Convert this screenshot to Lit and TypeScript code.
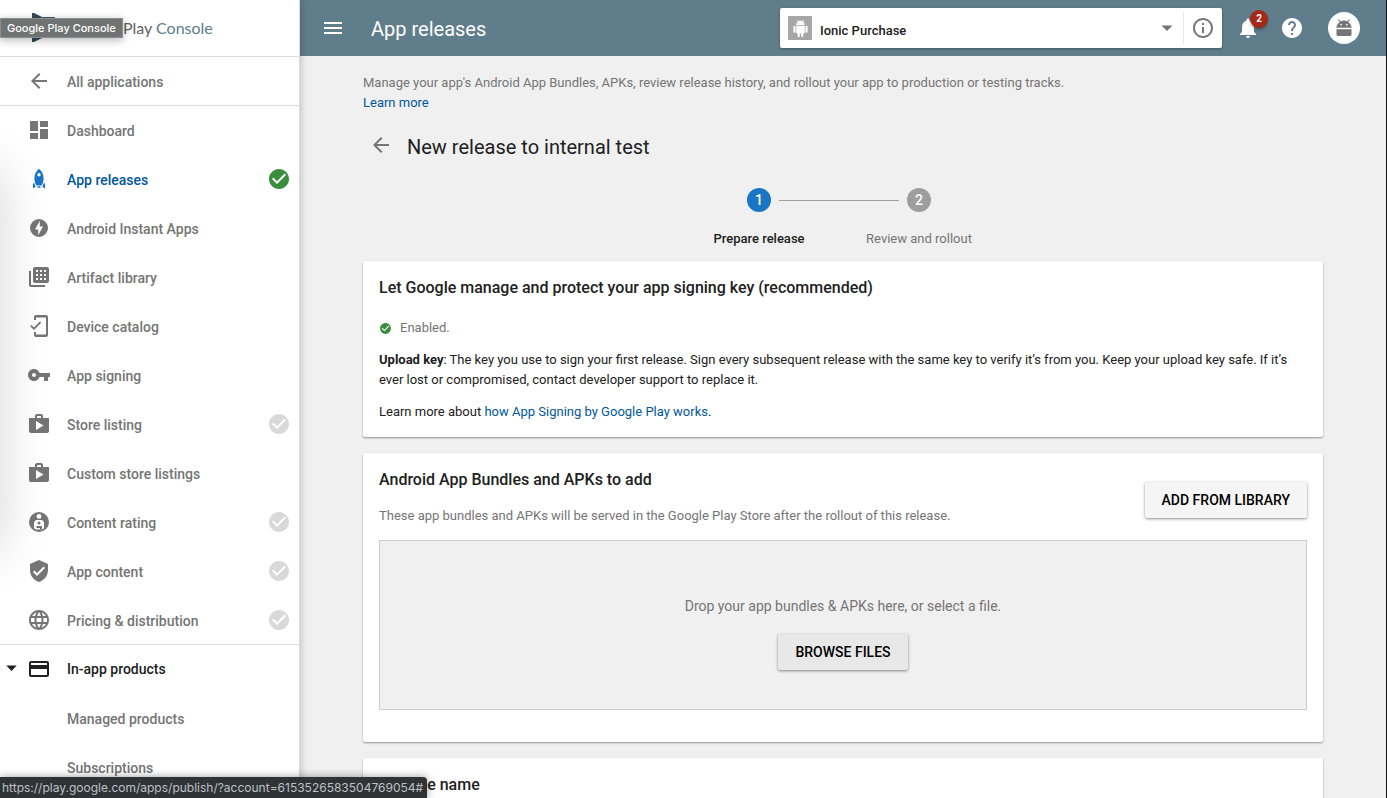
import { LitElement, html, css, svg, nothing } from "lit";
import { customElement } from "lit/decorators.js";

const icons: Record<string, unknown> = {
  back: svg`<path d="M20 11H7.83l5.59-5.59L12 4l-8 8 8 8 1.41-1.41L7.83 13H20v-2z"/>`,
  menu: svg`<path d="M3 18h18v-2H3v2zm0-5h18v-2H3v2zm0-7v2h18V6H3z"/>`,
  dashboard: svg`<path d="M3 13h8V3H3v10zm0 8h8v-6H3v6zm10 0h8V11h-8v10zm0-18v6h8V3h-8z"/>`,
  rocket: svg`<path fill-rule="evenodd" d="M12 1.800C9 4.200 7.400 7.600 7.400 11.400c0 2.600.8 4.900 2 7.100h5.200c1.200-2.200 2-4.500 2-7.100C16.600 7.600 15 4.200 12 1.800zm0 4.200a1.700 1.700 0 1 1 0 3.400A1.700 1.700 0 0 1 12 6z"/><path d="M7 15.500l-1 1.800V21.500l2.600-1.800zM17 15.500l1 1.800v4.200l-2.600-1.800zM10.600 19.200h2.800v1.600h-2.800z"/>`,
  instant: svg`<path fill-rule="evenodd" d="M12 3a9 9 0 1 0 0 18 9 9 0 0 0 0-18zm-.8 16.200v-5.700H8l4.800-8.700v5.700H16l-4.800 8.700z"/>`,
  artifact: svg`<path fill-rule="evenodd" d="M2 6h2v14h14v2H4c-1.100 0-2-.9-2-2zM8 2h12c1.100 0 2 .9 2 2v12c0 1.100-.9 2-2 2H8c-1.100 0-2-.9-2-2V4c0-1.100.9-2 2-2zm1 3v2h2V5zm4 0v2h2V5zm4 0v2h2V5zM9 9v2h2V9zm4 0v2h2V9zm4 0v2h2V9zM9 13v2h2v-2zm4 0v2h2v-2zm4 0v2h2v-2z"/>`,
  device: svg`<path d="M19 1H9c-1.100 0-2 .9-2 2v3h2V3.500h10v17H9V18H7v3c0 1.100.9 2 2 2h10c1.100 0 2-.9 2-2V3c0-1.100-.9-2-2-2zM7.010 13.470l-2.550-2.550-1.270 1.270L7 16l7.190-7.190-1.270-1.270z"/>`,
  key: svg`<path d="M12.650 10C11.830 7.670 9.610 6 7 6c-3.310 0-6 2.690-6 6s2.690 6 6 6c2.610 0 4.830-1.670 5.650-4H17v4h4v-4h2v-4H12.650zM7 14c-1.100 0-2-.9-2-2s.9-2 2-2 2 .9 2 2-.9 2-2 2z"/>`,
  shop: svg`<path d="M16 6V4c0-1.110-.89-2-2-2h-4c-1.110 0-2 .89-2 2v2H2v13c0 1.110.89 2 2 2h16c1.110 0 2-.89 2-2V6h-6zm-6-2h4v2h-4V4zM9 18V9l7.500 4.500L9 18z"/>`,
  rating: svg`<circle cx="12" cy="12" r="10"/><g fill="#fff"><circle cx="12" cy="6.400" r="2.400"/><path d="M9 10h6l2 2v6l-1.500 1.500H8.500L7 18v-6z"/></g><circle cx="12" cy="13" r="1.500"/><path d="M9.500 16h5.500v3.500h-2V18H9.500z"/>`,
  shield: svg`<path d="M12 1L3 5v6c0 5.550 3.840 10.740 9 12 5.160-1.260 9-6.450 9-12V5l-9-4zm-2 16l-4-4 1.410-1.410L10 14.170l6.590-6.590L18 9l-8 8z"/>`,
  globe: svg`<path d="M11.990 2C6.470 2 2 6.480 2 12s4.470 10 9.990 10C17.520 22 22 17.520 22 12S17.520 2 11.990 2zm6.930 6h-2.950c-.32-1.250-.78-2.450-1.380-3.560 1.840.63 3.370 1.910 4.330 3.560zM12 4.040c.83 1.200 1.480 2.530 1.910 3.960h-3.820c.43-1.430 1.080-2.760 1.910-3.960zM4.260 14C4.100 13.360 4 12.690 4 12s.1-1.360.26-2h3.380c-.08.66-.14 1.320-.14 2 0 .68.06 1.340.14 2H4.260zm.82 2h2.950c.32 1.250.78 2.450 1.380 3.560-1.840-.63-3.370-1.900-4.330-3.560zm2.950-8H5.080c.96-1.660 2.490-2.930 4.330-3.560C8.810 5.550 8.350 6.750 8.030 8zM12 19.960c-.83-1.200-1.480-2.530-1.910-3.960h3.820c-.43 1.430-1.080 2.760-1.910 3.960zM14.340 14H9.660c-.09-.66-.16-1.320-.16-2 0-.68.07-1.350.16-2h4.680c.09.65.16 1.320.16 2 0 .68-.07 1.340-.16 2zm.25 5.560c.6-1.110 1.060-2.310 1.380-3.560h2.950c-.96 1.650-2.490 2.930-4.330 3.560zM16.360 14c.08-.66.14-1.320.14-2 0-.68-.06-1.340-.14-2h3.380c.16.64.26 1.310.26 2s-.1 1.360-.26 2h-3.380z"/>`,
  card: svg`<path d="M20 4H4c-1.110 0-1.990.89-1.990 2L2 18c0 1.110.89 2 2 2h16c1.110 0 2-.89 2-2V6c0-1.110-.89-2-2-2zm0 14H4v-6h16v6zm0-10H4V6h16v2z"/>`,
  check: svg`<path d="M12 2C6.480 2 2 6.480 2 12s4.480 10 10 10 10-4.480 10-10S17.520 2 12 2zm-2 15l-5-5 1.410-1.410L10 14.170l7.590-7.590L19 8l-9 9z"/>`,
  caret: svg`<path d="M6.500 9.500h11L12 15z"/>`,
  info: svg`<path d="M11 17h2v-6h-2v6zm1-15C6.480 2 2 6.480 2 12s4.480 10 10 10 10-4.480 10-10S17.520 2 12 2zm0 18c-4.410 0-8-3.590-8-8s3.590-8 8-8 8 3.590 8 8-3.590 8-8 8zM11 9h2V7h-2v2z"/>`,
  bell: svg`<path d="M12 22c1.100 0 2-.9 2-2h-4c0 1.100.89 2 2 2zm6-6v-5c0-3.070-1.640-5.640-4.500-6.320V4c0-.83-.67-1.500-1.500-1.500s-1.500.67-1.500 1.500v.68C7.630 5.360 6 7.920 6 11v5l-2 2v1h16v-1l-2-2z"/>`,
  help: svg`<path d="M12 2C6.480 2 2 6.480 2 12s4.480 10 10 10 10-4.480 10-10S17.520 2 12 2zm1 17h-2v-2h2v2zm2.070-7.750l-.9.920C13.450 12.900 13 13.500 13 15h-2v-.5c0-1.100.45-2.100 1.170-2.830l1.240-1.260c.37-.36.59-.86.59-1.410 0-1.100-.9-2-2-2s-2 .9-2 2H8c0-2.210 1.790-4 4-4s4 1.790 4 4c0 .88-.36 1.680-.93 2.250z"/>`,
  droid: svg`<path d="M6 18c0 .55.45 1 1 1h1v3.500c0 .83.67 1.500 1.500 1.500s1.500-.67 1.500-1.500V19h2v3.500c0 .83.67 1.500 1.500 1.500s1.500-.67 1.500-1.500V19h1c.55 0 1-.45 1-1V8H6v10zM3.500 8C2.670 8 2 8.670 2 9.500v7c0 .83.67 1.500 1.500 1.500S5 17.330 5 16.500v-7C5 8.670 4.330 8 3.500 8zm17 0c-.83 0-1.500.67-1.500 1.500v7c0 .83.67 1.500 1.500 1.500s1.500-.67 1.500-1.500v-7c0-.83-.67-1.500-1.500-1.500zm-4.970-5.840l1.300-1.300c.2-.2.2-.51 0-.71-.2-.2-.51-.2-.71 0l-1.480 1.480C13.850 1.230 12.950 1 12 1c-.96 0-1.860.23-2.660.63L7.850.15c-.2-.2-.51-.2-.71 0-.2.2-.2.51 0 .71l1.310 1.310C6.970 3.260 6 5.010 6 7h12c0-1.990-.97-3.750-2.470-4.840zM10 5H9V4h1v1zm5 0h-1V4h1v1z"/>`,
  avatar: svg`<path d="M3 13.500h18v6.300c0 .9-.7 1.700-1.700 1.700H4.700C3.700 21.500 3 20.700 3 19.800zM17 4.700l1.900-2.200c.5-.6-.4-1.400-.9-.8L16 4c-1.200-.6-2.500-1-4-1s-2.800.4-4 1L6 1.700c-.5-.6-1.400.2-.9.8L7 4.700C4.800 6.100 3 8.400 3 11v.7h18V11c0-2.600-1.800-4.900-4-6.300zM8.500 9a1 1 0 1 1 0-2 1 1 0 0 1 0 2zm7 0a1 1 0 1 1 0-2 1 1 0 0 1 0 2z"/>`,
};

const icon = (name: string, cls = "") =>
  html`<svg class="icon ${cls}" viewBox="0 0 24 24" aria-hidden="true">${icons[name]}</svg>`;

interface NavItem {
  label: string;
  icon: string;
  state?: "done" | "todo";
  active?: boolean;
}

const NAV: NavItem[] = [
  { label: "Dashboard", icon: "dashboard" },
  { label: "App releases", icon: "rocket", state: "done", active: true },
  { label: "Android Instant Apps", icon: "instant" },
  { label: "Artifact library", icon: "artifact" },
  { label: "Device catalog", icon: "device" },
  { label: "App signing", icon: "key" },
  { label: "Store listing", icon: "shop", state: "todo" },
  { label: "Custom store listings", icon: "shop" },
  { label: "Content rating", icon: "rating", state: "todo" },
  { label: "App content", icon: "shield", state: "todo" },
  { label: "Pricing & distribution", icon: "globe", state: "todo" },
];

@customElement("app-root")
export class AppRoot extends LitElement {
  static styles = css`
    :host {
      display: block;
      height: 100vh;
      overflow: hidden;
      font-family: Roboto, "Liberation Sans", sans-serif;
      font-size: 13px;
      line-height: 20px;
      color: #212121;
      background: #f0f0f0;
    }
    * { box-sizing: border-box; }
    a { color: #01579b; text-decoration: none; }
    h1, h2, h3, p, ul, ol { margin: 0; padding: 0; font-weight: 400; }
    ul, ol { list-style: none; }
    button { font: inherit; border: 0; padding: 0; background: none; cursor: pointer; color: inherit; }
    .icon { width: 24px; height: 24px; fill: currentColor; display: block; flex: none; }
    .layout { display: grid; grid-template-columns: 300px minmax(0, 1fr); height: 100%; border-right: 1px solid #111; }

    .side { background: #fff; border-right: 1px solid #d8d8d8; box-shadow: 0 0 8px rgba(0, 0, 0, 0.25); z-index: 1; overflow: hidden; position: relative; }
    .glow { position: absolute; left: -40px; top: 170px; width: 40px; height: 380px; box-shadow: 0 0 50px rgba(0, 0, 0, 0.18); pointer-events: none; }
    .brand { display: flex; align-items: center; gap: 67px; height: 57px; padding-left: 31px; border-bottom: 1px solid #ddd; font-family: Lato, Roboto, sans-serif; font-size: 16px; color: #616161; }
    .brand span { color: #607d8b; }
    .logo { width: 25px; height: 30px; flex: none; }
    .item { display: flex; align-items: center; height: 49px; padding: 0 8px 0 27px; gap: 16px; font-size: 14px; font-weight: 500; color: #757575; }
    .item .label { flex: 1; }
    .item .icon { margin-bottom: 2px; }
    .all { padding-top: 2px; border-bottom: 1px solid #ddd; }
    .active { color: #01579b; }
    .active .lead { color: #1976c5; }
    .item .done { color: #388e3c; }
    .item .todo { color: #d9d9d9; }
    .group { margin-top: -1px; border-top: 1px solid #ddd; }
    .head { color: #212121; padding: 0 8px 2px 0; gap: 0; }
    .head .lead { margin: 0 16px 0 4px; }
    .head .tri { width: 23px; }
    .sub { padding-left: 67px; }

    .main { min-width: 0; }
    .top { display: flex; align-items: center; height: 56px; padding: 0 26px 0 21px; background: #607d8b; color: #fff; }
    .top h1 { flex: 1; margin-left: 26px; padding-top: 2px; font-size: 20px; line-height: 28px; }
    .picker { display: flex; align-items: center; width: 442px; height: 40px; padding-left: 8px; background: #fff; border-radius: 2px; box-shadow: 0 1px 3px rgba(0, 0, 0, 0.3); color: #757575; }
    .thumb { display: grid; place-items: center; width: 24px; height: 24px; background: #a6a6a6; color: #fff; }
    .thumb .icon { width: 17px; height: 17px; }
    .field { flex: 1; display: flex; align-items: center; min-width: 0; }
    .field select { flex: 1; height: 40px; margin-right: -24px; padding: 5px 0 0 8px; border: 0; background: none; appearance: none; font: 500 13px/20px Roboto, sans-serif; color: #212121; }
    .field .icon { pointer-events: none; margin-right: 4px; }
    .infobtn { display: grid; place-items: center; width: 39px; height: 32px; border-left: 1px solid #e8e8e8; }
    .bell { position: relative; margin-left: 14px; }
    .count { position: absolute; left: 14px; top: -6px; width: 18px; height: 18px; border-radius: 50%; background: #a52714; font-size: 10px; line-height: 18px; font-weight: 700; text-align: center; box-shadow: 0 2px 3px rgba(0, 0, 0, 0.3); }
    .help { margin-left: 20px; }
    .avatar { display: grid; place-items: center; width: 32px; height: 32px; margin-left: 24px; border-radius: 50%; background: #fff; color: #757575; }
    .avatar .icon { width: 20px; height: 20px; }

    .content { max-width: 960px; margin: 0 auto; padding-top: 17px; }
    .intro { color: #757575; }
    .title { display: flex; align-items: center; gap: 14px; margin-top: 20px; padding-left: 6px; color: #757575; }
    .title button { padding-bottom: 4px; }
    .title h2 { font-size: 20px; line-height: 28px; color: #212121; }
    .steps { display: flex; justify-content: center; margin: 27px 0 12px; padding-right: 8px; color: #757575; }
    .step { display: grid; justify-items: center; gap: 17px; width: 160px; line-height: 20px; position: relative; }
    .step + .step::before { content: ""; position: absolute; left: -60px; top: 12px; width: 120px; height: 1px; background: #9e9e9e; }
    .num { width: 24px; height: 24px; border-radius: 50%; background: #9e9e9e; color: #fff; font-size: 14px; line-height: 24px; text-align: center; font-weight: 500; }
    .current { color: #212121; font-weight: 500; }
    .current .num { background: #1976c5; }
    .card { background: #fff; border-radius: 2px; box-shadow: 0 1px 2px rgba(0, 0, 0, 0.4); padding: 17px 16px 15px; margin-bottom: 16px; }
    .card h3 { font-size: 16px; line-height: 20px; font-weight: 500; }
    .enabled { display: flex; align-items: center; gap: 8px; margin: 20px 0 12px; color: #757575; }
    .enabled .icon { width: 13px; height: 13px; color: #388e3c; }
    .gap { margin-bottom: 12px; }
    .row { display: flex; justify-content: space-between; align-items: flex-end; }
    .row .btn { margin-bottom: 8px; }
    .note { margin-top: 16px; color: #757575; }
    .btn { height: 36px; padding: 0 17px; border-radius: 2px; background: #f5f5f5; color: #000; font-size: 14px; font-weight: 500; box-shadow: 0 1px 3px rgba(0, 0, 0, 0.45); }
    .drop { display: flex; flex-direction: column; align-items: center; justify-content: center; gap: 18px; height: 170px; margin: 14px 0 17px; padding-top: 16px; background: #f0f0f0; border: 1px solid #ccc; font-size: 14px; color: #757575; }
    .drop .btn { background: #e8e8e8; }

    .tip { position: absolute; z-index: 3; left: 0; top: 18px; height: 20px; padding: 0 6px; border: 1px solid #8d8f8f; background: #707373; color: #fff; font: 500 11px/18px Inter, sans-serif; box-shadow: 0 2px 8px rgba(0, 0, 0, 0.3); }
    .status { position: absolute; z-index: 3; left: 0; bottom: 0; height: 21px; padding: 0 4px 0 2px; border-radius: 0 4px 0 0; background: #303336; color: #bdc1c6; font: 12px/21px Inter, sans-serif; box-shadow: 0 0 8px rgba(0, 0, 0, 0.4); }
  `;

  private navItem(n: NavItem) {
    return html`<li>
      <a class="item ${n.active ? "active" : ""}" href="#">
        ${icon(n.icon, "lead")}<span class="label">${n.label}</span>
        ${n.state ? icon("check", n.state) : nothing}
      </a>
    </li>`;
  }

  render() {
    return html`
      <div class="layout">
        <nav class="side" aria-label="Console">
          <div class="brand">
            <svg class="logo" viewBox="0 0 25 30" aria-hidden="true">
              <path fill="#2f4a57" d="M1 0h2l8 4v21L3 29H1z" />
              <path fill="#455f6b" d="M9 4h15v3H9z" />
            </svg>
            <div>Play <span>Console</span></div>
          </div>
          <a class="item all" href="#">${icon("back")}<span class="label">All applications</span></a>
          <ul>${NAV.map((n) => this.navItem(n))}</ul>
          <div class="group">
            <a class="item head" href="#">${icon("caret", "tri")}${icon("card", "lead")}<span class="label">In-app products</span></a>
            <a class="item sub" href="#">Managed products</a>
            <a class="item sub" href="#">Subscriptions</a>
          </div>
          <div class="glow"></div>
        </nav>
        <div class="main">
          <header class="top">
            <button aria-label="Menu">${icon("menu")}</button>
            <h1>App releases</h1>
            <div class="picker">
              <div class="thumb">${icon("droid")}</div>
              <div class="field">
                <select aria-label="Application"><option>Ionic Purchase</option></select>
                ${icon("caret")}
              </div>
              <button class="infobtn" aria-label="App details">${icon("info")}</button>
            </div>
            <button class="bell" aria-label="Notifications">${icon("bell")}<span class="count">2</span></button>
            <button class="help" aria-label="Help">${icon("help")}</button>
            <button class="avatar" aria-label="Account">${icon("avatar")}</button>
          </header>
          <main class="content">
            <p class="intro">
              Manage your app's Android App Bundles, APKs, review release history, and rollout your app to production or testing tracks.<br />
              <a href="#">Learn more</a>
            </p>
            <div class="title">
              <button aria-label="Back">${icon("back")}</button>
              <h2>New release to internal test</h2>
            </div>
            <ol class="steps">
              <li class="step current"><span class="num">1</span>Prepare release</li>
              <li class="step"><span class="num">2</span>Review and rollout</li>
            </ol>
            <section class="card">
              <h3>Let Google manage and protect your app signing key (recommended)</h3>
              <p class="enabled">${icon("check")}Enabled.</p>
              <p class="gap"><b>Upload key</b>: The key you use to sign your first release. Sign every subsequent release with the same key to verify it’s from you. Keep your upload key safe. If it’s ever lost or compromised, contact developer support to replace it.</p>
              <p>Learn more about <a href="#">how App Signing by Google Play works</a>.</p>
            </section>
            <section class="card">
              <div class="row">
                <div>
                  <h3>Android App Bundles and APKs to add</h3>
                  <p class="note">These app bundles and APKs will be served in the Google Play Store after the rollout of this release.</p>
                </div>
                <button class="btn">ADD FROM LIBRARY</button>
              </div>
              <div class="drop">
                <p>Drop your app bundles &amp; APKs here, or select a file.</p>
                <button class="btn">BROWSE FILES</button>
              </div>
            </section>
            <section class="card"><h3>Release name</h3></section>
          </main>
        </div>
      </div>
      <div class="tip" role="tooltip">Google Play Console</div>
      <div class="status">https://play.google.com/apps/publish/?account=6153526583504769054#</div>
    `;
  }
}
